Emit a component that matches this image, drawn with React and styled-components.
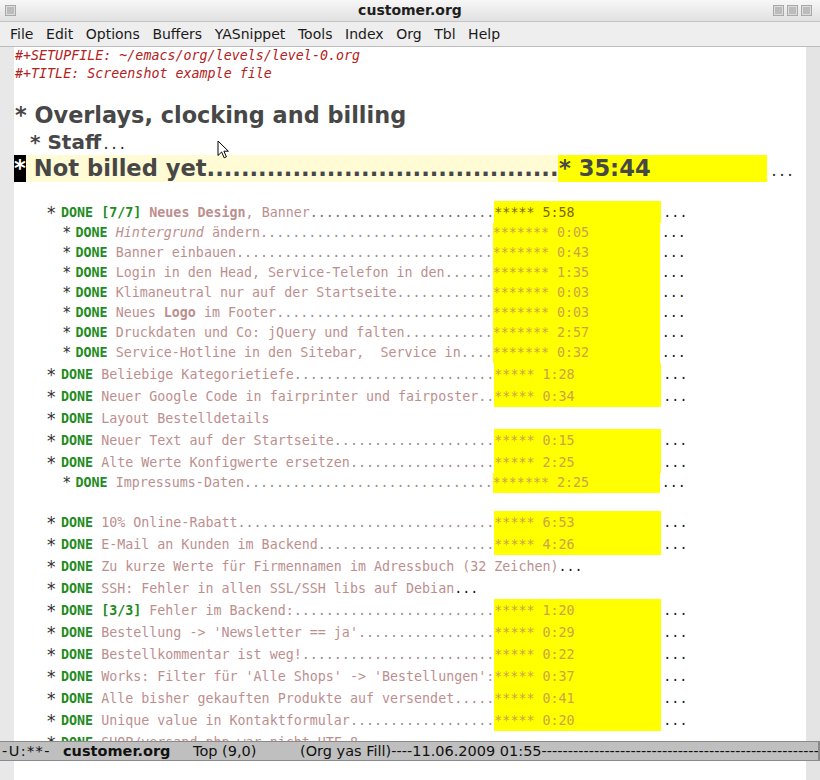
import React from "react";
import styled, { createGlobalStyle } from "styled-components";

const MONO = `"DejaVu Sans Mono", "Liberation Mono", monospace`;
const SANS = `"DejaVu Sans", "Liberation Sans", sans-serif`;

const GlobalStyle = createGlobalStyle`
  html, body { margin: 0; padding: 0; background: #fff; }
  body { width: 820px; height: 780px; overflow: hidden; }
`;

const Frame = styled.div`
  width: 820px;
  height: 780px;
  display: flex;
  flex-direction: column;
  overflow: hidden;
  background: #fff;
`;

const TitleBar = styled.div`
  flex: none;
  height: 21px;
  display: grid;
  grid-template-columns: 60px 1fr 60px;
  align-items: center;
  background: linear-gradient(#f7f7f7, #e1e1e1);
  border-bottom: 1px solid #c4c4c4;
  font: bold 14px ${SANS};
  color: #1e1e1e;
`;

const Title = styled.div`
  text-align: center;
  line-height: 21px;
`;

const BtnGroup = styled.div`
  display: flex;
  gap: 3px;
  justify-content: ${(p) => (p.$right ? "flex-end" : "flex-start")};
  padding: ${(p) => (p.$right ? "0 8px 0 0" : "0 0 0 5px")};
`;

const WinBtn = styled.span`
  width: 11px;
  height: 11px;
  box-sizing: border-box;
  border: 1px solid #a9a9a9;
  background: #bcbcbc;
  box-shadow: inset 0 0 0 1px #dcdcdc;
`;

const MenuBar = styled.div`
  flex: none;
  height: 24px;
  display: flex;
  align-items: center;
  gap: 12.6px;
  padding-left: 10px;
  background: #eeeeee;
  border-bottom: 1px solid #bdbdbd;
  font: 14px ${SANS};
  color: #1a1a1a;
`;

const Body = styled.div`
  flex: none;
  height: 694px;
  display: flex;
`;

const Fringe = styled.div`
  flex: none;
  width: 14px;
  background: #e8e8e8;
`;

const Scrollbar = styled.div`
  flex: none;
  width: 14px;
  background: #e4e4e4;
`;

const Buffer = styled.div`
  flex: 1;
  position: relative;
  overflow: hidden;
  padding-left: 1px;
  background: #fff;
`;

const MetaLine = styled.div`
  height: 18px;
  font: italic 13.33px/18px ${MONO};
  color: #b22222;
  white-space: pre;
`;

const Blank = styled.div`
  height: ${(p) => p.$h}px;
`;

const Heading = styled.div`
  height: ${(p) => p.$h}px;
  padding-left: ${(p) => p.$indent || 0}px;
  font: bold ${(p) => p.$size}px/${(p) => p.$h}px ${SANS};
  color: #474747;
  white-space: pre;
  display: flex;
  align-items: baseline;
`;

const Cursor = styled.span`
  width: 12px;
  margin-left: -1px;
  background: #000;
  color: #fff;
`;

const PaleBand = styled.span`
  width: 532px;
  overflow: hidden;
  background: #fffbd5;
`;

const HeadClock = styled.span`
  width: 209px;
  padding-left: 1px;
  box-sizing: border-box;
  background: #ffff00;
`;

const Fold = styled.span`
  font-family: ${MONO};
  font-size: 13.33px;
  font-weight: normal;
  color: #1a1a1a;
  margin-left: ${(p) => p.$gap || 0}px;
`;

const Row = styled.div`
  height: ${(p) => (p.$lvl === 1 ? 22 : 20)}px;
  padding-left: ${(p) => (p.$lvl === 1 ? 32 : 48)}px;
  display: flex;
  align-items: flex-end;
  white-space: pre;
  font: 13.33px/20px ${MONO};
`;

const Star = styled.span`
  flex: none;
  width: ${(p) => (p.$lvl === 1 ? 14 : 12.5)}px;
  font: ${(p) => (p.$lvl === 1 ? 17 : 15)}px/20px ${SANS};
  color: #333;
`;

const Done = styled.span`
  font-weight: bold;
  color: #228b22;
`;

const Part = styled.span`
  color: ${(p) => (p.$kind === "cookie" ? "#228b22" : "#bc8f8f")};
  font-weight: ${(p) => (p.$kind === "b" || p.$kind === "cookie" ? "bold" : "normal")};
  font-style: ${(p) => (p.$kind === "i" ? "italic" : "normal")};
`;

const Dots = styled.span`
  color: ${(p) => (p.$dark ? "#6f6f6f" : "#9d9090")};
`;

const Clock = styled.span`
  flex: none;
  align-self: stretch;
  width: 167px;
  display: flex;
  align-items: flex-end;
  background: #ffff00;
  color: ${(p) => (p.$dark ? "#7e6700" : "#cca34a")};
`;

const ModeLine = styled.div`
  flex: none;
  height: 20px;
  box-sizing: border-box;
  display: flex;
  align-items: center;
  padding-left: 2px;
  background: #bfbfbf;
  border-top: 1px solid #8a8a8a;
  border-bottom: 1px solid #8a8a8a;
  border-right: 2px solid #8a8a8a;
  font: 14.5px/18px ${SANS};
  color: #111;
  white-space: pre;
  overflow: hidden;
`;

const Seg = styled.span`
  flex: none;
  width: ${(p) => (p.$w ? `${p.$w}px` : "auto")};
  font-weight: ${(p) => (p.$bold ? "bold" : "normal")};
  letter-spacing: ${(p) => p.$track || 0}px;
`;

const SegRest = styled.span`
  flex: 1;
  overflow: hidden;
`;

const Minibuffer = styled.div`
  flex: 1;
  display: flex;
`;

const Echo = styled.div`
  flex: 1;
  background: #fff;
`;

const Pointer = styled.svg`
  position: absolute;
  left: 203px;
  top: 93px;
  width: 12px;
  height: 19px;
`;

const menu = ["File", "Edit", "Options", "Buffers", "YASnippet", "Tools", "Index", "Org", "Tbl", "Help"];

const rows = [
  { lvl: 1, parts: [["[7/7]", "cookie"], [" "], ["Neues Design", "b"], [", Banner"]], time: "***** 5:58", dark: true },
  { lvl: 2, parts: [["Hintergrund", "i"], [" ändern"]], time: "******* 0:05" },
  { lvl: 2, parts: [["Banner einbauen"]], time: "******* 0:43" },
  { lvl: 2, parts: [["Login in den Head, Service-Telefon in den"]], time: "******* 1:35" },
  { lvl: 2, parts: [["Klimaneutral nur auf der Startseite"]], time: "******* 0:03" },
  { lvl: 2, parts: [["Neues "], ["Logo", "b"], [" im Footer"]], time: "******* 0:03" },
  { lvl: 2, parts: [["Druckdaten und Co: jQuery und falten"]], time: "******* 2:57" },
  { lvl: 2, parts: [["Service-Hotline in den Sitebar,  Service in"]], time: "******* 0:32" },
  { lvl: 1, parts: [["Beliebige Kategorietiefe"]], time: "***** 1:28" },
  { lvl: 1, parts: [["Neuer Google Code in fairprinter und fairposter"]], time: "***** 0:34" },
  { lvl: 1, parts: [["Layout Bestelldetails"]] },
  { lvl: 1, parts: [["Neuer Text auf der Startseite"]], time: "***** 0:15" },
  { lvl: 1, parts: [["Alte Werte Konfigwerte ersetzen"]], time: "***** 2:25" },
  { lvl: 2, parts: [["Impressums-Daten"]], time: "******* 2:25" },
  { blank: 18 },
  { lvl: 1, parts: [["10% Online-Rabatt"]], time: "***** 6:53" },
  { lvl: 1, parts: [["E-Mail an Kunden im Backend"]], time: "***** 4:26" },
  { lvl: 1, parts: [["Zu kurze Werte für Firmennamen im Adressbuch (32 Zeichen)"]], folded: true },
  { lvl: 1, parts: [["SSH: Fehler in allen SSL/SSH libs auf Debian"]], folded: true },
  { lvl: 1, parts: [["[3/3]", "cookie"], [" Fehler im Backend:"]], time: "***** 1:20" },
  { lvl: 1, parts: [["Bestellung -> 'Newsletter == ja'"]], time: "***** 0:29" },
  { lvl: 1, parts: [["Bestellkommentar ist weg!"]], time: "***** 0:22" },
  { lvl: 1, parts: [["Works: Filter für 'Alle Shops' -> 'Bestellungen':"]], time: "***** 0:37" },
  { lvl: 1, parts: [["Alle bisher gekauften Produkte auf versendet"]], time: "***** 0:41" },
  { lvl: 1, parts: [["Unique value in Kontaktformular"]], time: "***** 0:20" },
  { lvl: 1, parts: [["SHOP/versand.php war nicht UTF-8"]] },
];

function TaskRow({ row }) {
  const len = row.parts.reduce((n, [t]) => n + [...t].length, 0);
  const column = row.lvl === 1 ? 49 : 47;
  const dots = row.time ? ".".repeat(Math.max(0, column - len)) : "";
  return (
    <Row $lvl={row.lvl}>
      <Star $lvl={row.lvl}>*</Star>
      <Done>DONE </Done>
      {row.parts.map(([text, kind], i) => (
        <Part key={i} $kind={kind}>
          {text}
        </Part>
      ))}
      {dots && <Dots $dark={row.dark}>{dots}</Dots>}
      {row.time && <Clock $dark={row.dark}>{row.time}</Clock>}
      {(row.time || row.folded) && <Fold $gap={row.time ? 2 : 0}>...</Fold>}
    </Row>
  );
}

export default function App() {
  return (
    <>
      <GlobalStyle />
      <Frame>
        <TitleBar>
          <BtnGroup>
            <WinBtn />
          </BtnGroup>
          <Title>customer.org</Title>
          <BtnGroup $right>
            <WinBtn />
            <WinBtn />
            <WinBtn />
          </BtnGroup>
        </TitleBar>
        <MenuBar>
          {menu.map((m) => (
            <span key={m}>{m}</span>
          ))}
        </MenuBar>
        <Body>
          <Fringe />
          <Buffer>
            <MetaLine>#+SETUPFILE: ~/emacs/org/levels/level-0.org</MetaLine>
            <MetaLine>#+TITLE: Screenshot example file</MetaLine>
            <Blank $h={18} />
            <Heading $size={22.4} $h={28}>* Overlays, clocking and billing</Heading>
            <Heading $size={20} $h={26} $indent={15}>
              <span>* Staff</span>
              <Fold $gap={1}>...</Fold>
            </Heading>
            <Heading $size={22.6} $h={27}>
              <Cursor>*</Cursor>
              <PaleBand>{" Not billed yet" + ".".repeat(70)}</PaleBand>
              <HeadClock>* 35:44</HeadClock>
              <Fold $gap={3}>...</Fold>
            </Heading>
            <Blank $h={19} />
            {rows.map((row, i) =>
              row.blank ? <Blank key={i} $h={row.blank} /> : <TaskRow key={i} row={row} />
            )}
            <Pointer viewBox="0 0 12 19">
              <path
                d="M1 1 L1 15.5 L4.6 12 L7.2 17.8 L9.4 16.8 L6.9 11.2 L11.4 11.2 Z"
                fill="#fff"
                stroke="#000"
                strokeWidth="1"
                strokeLinejoin="round"
              />
            </Pointer>
          </Buffer>
          <Scrollbar />
        </Body>
        <ModeLine>
          <Seg $w={61} $track={1.4}>
            -U:**-
          </Seg>
          <Seg $w={130} $bold>
            customer.org
          </Seg>
          <Seg $w={107}>Top (9,0)</Seg>
          <SegRest>{"(Org yas Fill)----11.06.2009 01:55" + "-".repeat(90)}</SegRest>
        </ModeLine>
        <Minibuffer>
          <Fringe />
          <Echo />
          <Scrollbar />
        </Minibuffer>
      </Frame>
    </>
  );
}
